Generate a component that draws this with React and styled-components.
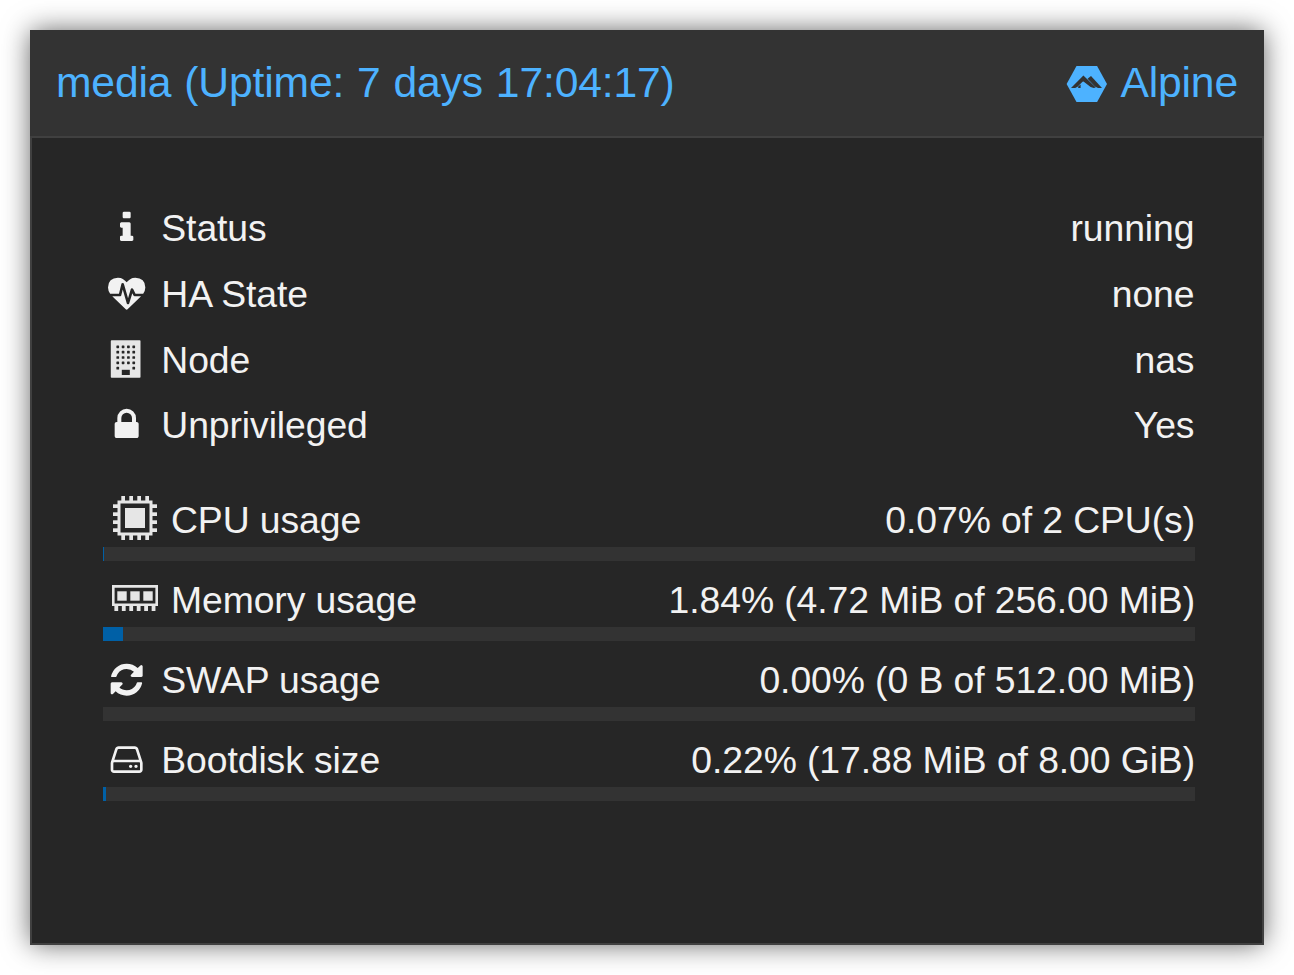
import React from "react";
import styled, { createGlobalStyle } from "styled-components";

const GlobalStyle = createGlobalStyle`
  * { box-sizing: border-box; }
  body { margin: 0; background: #fff; }
`;

const Page = styled.main`
  width: 1294px;
  height: 975px;
  padding: 30px;
  overflow: hidden;
  background: #fff;
  font-family: "Liberation Sans", Helvetica, Arial, sans-serif;
`;

const Panel = styled.section`
  width: 1234px;
  height: 915px;
  display: flex;
  flex-direction: column;
  border: 2px solid #404040;
  background: #262626;
  box-shadow: 0 0 26px -1px rgba(0, 0, 0, 0.64);
`;

const Header = styled.header`
  margin: -2px -2px 0;
  height: 108px;
  padding: 0 26px 2px;
  display: flex;
  align-items: center;
  justify-content: space-between;
  background: #333;
  border-bottom: 2px solid #404040;
  color: #4db2ff;
  font-size: 42.67px;
  line-height: 50px;
  white-space: nowrap;
`;

const Title = styled.span`
  letter-spacing: -0.16px;
  word-spacing: 1.2px;
`;

const Distro = styled.span`
  display: flex;
  align-items: center;
  gap: 12.8px;
  svg { margin-top: 4px; }
`;

const Body = styled.div`
  padding: 57.4px 67.6px 0 71px;
  color: #f2f2f2;
  font-size: 37.33px;
  letter-spacing: -0.09px;
`;

const InfoList = styled.div`
  display: grid;
  grid-auto-rows: 65.67px;
`;

const Line = styled.div`
  display: flex;
  align-items: center;
  justify-content: space-between;
  height: 66px;
  line-height: 44px;
  white-space: nowrap;
`;

const Label = styled.span`
  display: flex;
  align-items: center;
  gap: ${(p) => (p.$wide ? 11 : 15.8)}px;
  padding-left: ${(p) => (p.$wide ? 5 : 5.2)}px;
  svg { margin-bottom: ${(p) => (p.$wide ? 4 : 0.6)}px; }
`;

const UsageList = styled.div`
  display: grid;
  grid-auto-rows: 80px;
  margin-top: 22.9px;
`;

const Usage = styled.div`
  display: flex;
  flex-direction: column;
  ${Line} { height: 66px; padding-top: 12px; }
`;

const Track = styled.div`
  width: 1092px;
  height: 14px;
  background: #333;
`;

const Fill = styled.div`
  height: 100%;
  background: #0060a6;
`;

const Glyph = styled.svg`
  display: block;
  flex: none;
  fill: currentColor;
  overflow: visible;
`;

const paths = {
  info: "M1216 1344v128q0 26-19 45t-45 19h-512q-26 0-45-19t-19-45v-128q0-26 19-45t45-19h64v-384h-64q-26 0-45-19t-19-45v-128q0-26 19-45t45-19h384q26 0 45 19t19 45v576h64q26 0 45 19t19 45zm-128-1152v192q0 26-19 45t-45 19h-256q-26 0-45-19t-19-45v-192q0-26 19-45t45-19h256q26 0 45 19t19 45z",
  heart: "M1280 1024h305q-5 6-10 10.5t-9 7.5l-3 4-623 600q-18 18-44 18t-44-18l-624-602q-5-2-21-20h369q22 0 39.5-13.5t22.5-34.5l70-281 190 667q6 20 23 33t39 13q21 0 38-13t23-33l146-485 56 112q18 35 57 35zm512-428q0 145-103 300h-369l-111-221q-8-17-25.5-27t-36.5-8q-45 5-56 46l-129 430-196-686q-6-20-23.5-33t-39.5-13-39 13.5-22 34.5l-116 464h-423q-103-155-103-300 0-220 127-344t351-124q62 0 126.5 21.5t120 58 95.5 68.5 76 68q36-36 76-68t95.5-68.5 120-58 126.5-21.5q224 0 351 124t127 344z",
  lock: "M640 768h512v-192q0-106-75-181t-181-75-181 75-75 181v192zm832 96v576q0 40-28 68t-68 28h-960q-40 0-68-28t-28-68v-576q0-40 28-68t68-28h32v-192q0-184 132-316t316-132 316 132 132 316v192h32q40 0 68 28t28 68z",
  refresh: "M1639 1056q0 5-1 7-64 268-268 434.5t-478 166.5q-146 0-282.5-55t-243.5-157l-129 129q-19 19-45 19t-45-19-19-45v-448q0-26 19-45t45-19h448q26 0 45 19t19 45-19 45l-137 137q71 66 161 102t187 36q134 0 250-65t186-179q11-17 53-117 8-23 30-23h192q13 0 22.5 9.5t9.5 22.5zm25-800v448q0 26-19 45t-45 19h-448q-26 0-45-19t-19-45 19-45l138-138q-148-137-349-137-134 0-250 65t-186 179q-11 17-53 117-8 23-30 23h-199q-13 0-22.5-9.5t-9.5-22.5v-7q65-268 270-434.5t480-166.5q146 0 284 55.5t245 156.5l130-129q19-19 45-19t45 19 19 45z",
  disk: "M1168 1216q0 33-23.5 56.5t-56.5 23.5-56.5-23.5-23.5-56.5 23.5-56.5 56.5-23.5 56.5 23.5 23.5 56.5zm256 0q0 33-23.5 56.5t-56.5 23.5-56.5-23.5-23.5-56.5 23.5-56.5 56.5-23.5 56.5 23.5 23.5 56.5zm112 160v-320q0-13-9.5-22.5t-22.5-9.5h-1216q-13 0-22.5 9.5t-9.5 22.5v320q0 13 9.5 22.5t22.5 9.5h1216q13 0 22.5-9.5t9.5-22.5zm-1230-480h1180l-157-482q-4-13-16-21.5t-26-8.5h-782q-14 0-26 8.5t-16 21.5zm1358 160v320q0 66-47 113t-113 47h-1216q-66 0-113-47t-47-113v-320q0-25 16-75l197-606q17-53 63-86t101-33h782q55 0 101 33t63 86l197 606q16 50 16 75z",
};

const FontIcon = ({ name }) => (
  <Glyph width="37.33" height="37.33" viewBox="0 0 1792 1792">
    <path d={paths[name]} />
  </Glyph>
);

const BuildingIcon = () => (
  <Glyph width="37.33" height="38" viewBox="0 0 37.33 38" color="#e6e6e6">
    <rect x="2.8" y="0.3" width="29.7" height="37.4" rx="0.8" />
    <g fill="#262626">
      {[0, 1, 2, 3, 4].map((r) =>
        [0, 1, 2, 3].filter((c) => r < 4 || c === 0 || c === 3).map((c) => (
          <rect key={`${r}${c}`} x={8.4 + c * 5.33} y={5.5 + r * 5.33} width="2.7" height="2.7" rx="0.6" />
        ))
      )}
      <rect x="13.8" y="29.8" width="8" height="5.2" />
    </g>
  </Glyph>
);

const CpuIcon = () => (
  <Glyph width="52" height="44" viewBox="0 0 52 44" color="#e6e6e6">
    <path fillRule="evenodd" d="M9.5 4.5h35v35h-35zM12.5 7.5v29h29v-29z" />
    <rect x="17" y="12" width="20" height="20" />
    {[8.3, 16.3, 24.3, 32.3].map((p) => (
      <React.Fragment key={p}>
        <rect x={p + 5} y="0" width="3.7" height="5" />
        <rect x={p + 5} y="39" width="3.7" height="5" />
        <rect x="5" y={p} width="5" height="3.7" />
        <rect x="44" y={p} width="5" height="3.7" />
      </React.Fragment>
    ))}
  </Glyph>
);

const MemoryIcon = () => (
  <Glyph width="52" height="44" viewBox="0 0 52 44" color="#e6e6e6">
    <path fillRule="evenodd" d="M4 9h46v21H4zM6.6 11.7v15.9h40.8V11.7z" />
    {[9.3, 22.3, 35.3].map((x) => <rect key={x} x={x} y="15.3" width="9.4" height="9.4" />)}
    {[0, 1, 2, 3, 4, 5].map((i) => <rect key={i} x={6.4 + i * 7.45} y="29.5" width="3.8" height="5.5" />)}
  </Glyph>
);

const AlpineIcon = () => (
  <Glyph width="41.5" height="36" viewBox="0 0 41.5 36">
    <path d="M10.5 0h20.6L41 18 31.1 36H10.5L0.6 18z" />
    <g fill="#333">
      <path d="M5 21.9 17.4 9.6 29.8 21.6l-2 .4-3.2-.9-7.1-5.6-1 .3-5 5-2.3 1.1z" />
      <path d="M12.2 21.9v-1.4l2.4-2v3.4z" />
      <path d="M21.6 12.8 25 10 36 21.9h-4l-3.1-1.4z" />
    </g>
  </Glyph>
);

const info = [
  { icon: <FontIcon name="info" />, label: "Status", value: "running" },
  { icon: <FontIcon name="heart" />, label: "HA State", value: "none" },
  { icon: <BuildingIcon />, label: "Node", value: "nas" },
  { icon: <FontIcon name="lock" />, label: "Unprivileged", value: "Yes" },
];

const usage = [
  { icon: <CpuIcon />, wide: true, label: "CPU usage", value: "0.07% of 2 CPU(s)", fill: 1 },
  { icon: <MemoryIcon />, wide: true, label: "Memory usage", value: "1.84% (4.72 MiB of 256.00 MiB)", fill: 20 },
  { icon: <FontIcon name="refresh" />, label: "SWAP usage", value: "0.00% (0 B of 512.00 MiB)", fill: 0 },
  { icon: <FontIcon name="disk" />, label: "Bootdisk size", value: "0.22% (17.88 MiB of 8.00 GiB)", fill: 3 },
];

const Row = ({ item }) => (
  <Line>
    <Label $wide={item.wide}>{item.icon}<span>{item.label}</span></Label>
    <span>{item.value}</span>
  </Line>
);

export default function App() {
  return (
    <>
      <GlobalStyle />
      <Page>
        <Panel>
          <Header>
            <Title>media (Uptime: 7 days 17:04:17)</Title>
            <Distro><AlpineIcon /><Title>Alpine</Title></Distro>
          </Header>
          <Body>
            <InfoList>{info.map((i) => <Row key={i.label} item={i} />)}</InfoList>
            <UsageList>
              {usage.map((u) => (
                <Usage key={u.label}>
                  <Row item={u} />
                  <Track><Fill style={{ width: u.fill }} /></Track>
                </Usage>
              ))}
            </UsageList>
          </Body>
        </Panel>
      </Page>
    </>
  );
}
